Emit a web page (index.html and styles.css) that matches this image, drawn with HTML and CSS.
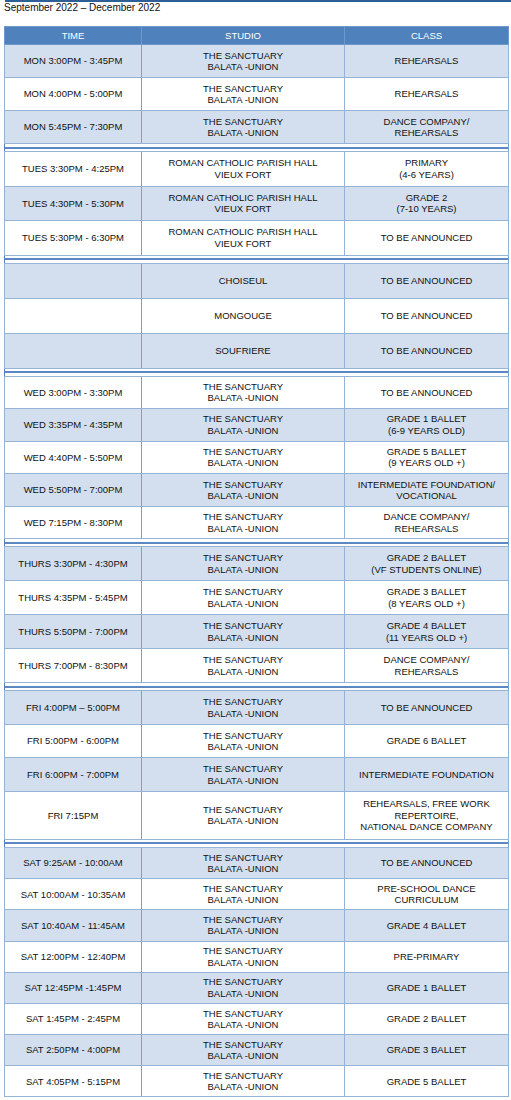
FILE: index.html
```html
<!DOCTYPE html>
<html lang="en">
<head>
<meta charset="utf-8">
<title>Schedule</title>
<link rel="stylesheet" href="styles.css">
</head>
<body>
<div class="page">
  <div class="topbar"></div>
  <div class="title">September 2022 – December 2022</div>
  <table class="sched">
    <colgroup><col class="c1"><col class="c2"><col class="c3"></colgroup>
    <thead>
      <tr class="head"><th>TIME</th><th>STUDIO</th><th>CLASS</th></tr>
    </thead>
    <tbody>
      <tr class="lt mon"><td>MON 3:00PM - 3:45PM</td><td>THE SANCTUARY<br>BALATA -UNION</td><td>REHEARSALS</td></tr>
      <tr class="mon"><td>MON 4:00PM - 5:00PM</td><td>THE SANCTUARY<br>BALATA -UNION</td><td>REHEARSALS</td></tr>
      <tr class="lt mon"><td>MON 5:45PM - 7:30PM</td><td>THE SANCTUARY<br>BALATA -UNION</td><td>DANCE COMPANY/<br>REHEARSALS</td></tr>
      <tr class="sep"><td colspan="3"><div class="rule"></div></td></tr>
      <tr class="tue"><td>TUES 3:30PM - 4:25PM</td><td>ROMAN CATHOLIC PARISH HALL<br>VIEUX FORT</td><td>PRIMARY<br>(4-6 YEARS)</td></tr>
      <tr class="lt tue"><td>TUES 4:30PM - 5:30PM</td><td>ROMAN CATHOLIC PARISH HALL<br>VIEUX FORT</td><td>GRADE 2<br>(7-10 YEARS)</td></tr>
      <tr class="tue"><td>TUES 5:30PM - 6:30PM</td><td>ROMAN CATHOLIC PARISH HALL<br>VIEUX FORT</td><td>TO BE ANNOUNCED</td></tr>
      <tr class="sep"><td colspan="3"><div class="rule"></div></td></tr>
      <tr class="lt loc"><td></td><td>CHOISEUL</td><td>TO BE ANNOUNCED</td></tr>
      <tr class="loc"><td></td><td>MONGOUGE</td><td>TO BE ANNOUNCED</td></tr>
      <tr class="lt loc"><td></td><td>SOUFRIERE</td><td>TO BE ANNOUNCED</td></tr>
      <tr class="sep"><td colspan="3"><div class="rule"></div></td></tr>
      <tr class="wed"><td>WED 3:00PM - 3:30PM</td><td>THE SANCTUARY<br>BALATA -UNION</td><td>TO BE ANNOUNCED</td></tr>
      <tr class="lt wed"><td>WED 3:35PM - 4:35PM</td><td>THE SANCTUARY<br>BALATA -UNION</td><td>GRADE 1 BALLET<br>(6-9 YEARS OLD)</td></tr>
      <tr class="wed"><td>WED 4:40PM - 5:50PM</td><td>THE SANCTUARY<br>BALATA -UNION</td><td>GRADE 5 BALLET<br>(9 YEARS OLD +)</td></tr>
      <tr class="lt wed"><td>WED 5:50PM - 7:00PM</td><td>THE SANCTUARY<br>BALATA -UNION</td><td>INTERMEDIATE FOUNDATION/<br>VOCATIONAL</td></tr>
      <tr class="wed"><td>WED 7:15PM - 8:30PM</td><td>THE SANCTUARY<br>BALATA -UNION</td><td>DANCE COMPANY/<br>REHEARSALS</td></tr>
      <tr class="sep"><td colspan="3"><div class="rule"></div></td></tr>
      <tr class="lt thu"><td>THURS 3:30PM - 4:30PM</td><td>THE SANCTUARY<br>BALATA -UNION</td><td>GRADE 2 BALLET<br>(VF STUDENTS ONLINE)</td></tr>
      <tr class="thu"><td>THURS 4:35PM - 5:45PM</td><td>THE SANCTUARY<br>BALATA -UNION</td><td>GRADE 3 BALLET<br>(8 YEARS OLD +)</td></tr>
      <tr class="lt thu"><td>THURS 5:50PM - 7:00PM</td><td>THE SANCTUARY<br>BALATA -UNION</td><td>GRADE 4 BALLET<br>(11 YEARS OLD +)</td></tr>
      <tr class="thu"><td>THURS 7:00PM - 8:30PM</td><td>THE SANCTUARY<br>BALATA -UNION</td><td>DANCE COMPANY/<br>REHEARSALS</td></tr>
      <tr class="sep"><td colspan="3"><div class="rule"></div></td></tr>
      <tr class="lt fri"><td>FRI 4:00PM – 5:00PM</td><td>THE SANCTUARY<br>BALATA -UNION</td><td>TO BE ANNOUNCED</td></tr>
      <tr class="fri"><td>FRI 5:00PM - 6:00PM</td><td>THE SANCTUARY<br>BALATA -UNION</td><td>GRADE 6 BALLET</td></tr>
      <tr class="lt fri"><td>FRI 6:00PM - 7:00PM</td><td>THE SANCTUARY<br>BALATA -UNION</td><td>INTERMEDIATE FOUNDATION</td></tr>
      <tr class="tall"><td>FRI 7:15PM</td><td>THE SANCTUARY<br>BALATA -UNION</td><td>REHEARSALS, FREE WORK<br>REPERTOIRE,<br>NATIONAL DANCE COMPANY</td></tr>
      <tr class="sep"><td colspan="3"><div class="rule"></div></td></tr>
      <tr class="lt sat"><td>SAT 9:25AM - 10:00AM</td><td>THE SANCTUARY<br>BALATA -UNION</td><td>TO BE ANNOUNCED</td></tr>
      <tr class="sat"><td>SAT 10:00AM - 10:35AM</td><td>THE SANCTUARY<br>BALATA -UNION</td><td>PRE-SCHOOL DANCE<br>CURRICULUM</td></tr>
      <tr class="lt sat"><td>SAT 10:40AM - 11:45AM</td><td>THE SANCTUARY<br>BALATA -UNION</td><td>GRADE 4 BALLET</td></tr>
      <tr class="sat"><td>SAT 12:00PM - 12:40PM</td><td>THE SANCTUARY<br>BALATA -UNION</td><td>PRE-PRIMARY</td></tr>
      <tr class="lt sat"><td>SAT 12:45PM -1:45PM</td><td>THE SANCTUARY<br>BALATA -UNION</td><td>GRADE 1 BALLET</td></tr>
      <tr class="sat"><td>SAT 1:45PM - 2:45PM</td><td>THE SANCTUARY<br>BALATA -UNION</td><td>GRADE 2 BALLET</td></tr>
      <tr class="lt sat"><td>SAT 2:50PM - 4:00PM</td><td>THE SANCTUARY<br>BALATA -UNION</td><td>GRADE 3 BALLET</td></tr>
      <tr class="sat"><td>SAT 4:05PM - 5:15PM</td><td>THE SANCTUARY<br>BALATA -UNION</td><td>GRADE 5 BALLET</td></tr>
    </tbody>
  </table>
</div>
</body>
</html>
```

FILE: styles.css
```css
html, body {
  margin: 0;
  padding: 0;
  background: #ffffff;
}

.page {
  padding-left: 4px;
  font-family: "Liberation Sans", Arial, sans-serif;
  color: #111111;
}

.topbar {
  height: 2px;
  margin-left: 1px;
  background: #2f5f97;
}

.title {
  font-size: 10px;
  line-height: 12px;
}

.sched {
  margin-top: 12px;
  width: 504px;
  border-collapse: collapse;
  table-layout: fixed;
  border: 1px solid #4f81bd;
  font-size: 9.5px;
  line-height: 11.5px;
}

.c1 { width: 137px; }
.c2 { width: 203px; }
.c3 { width: 164px; }

.sched th,
.sched td {
  border: 1px solid #95b3d7;
  padding: 0 2px;
  text-align: center;
  vertical-align: middle;
}

.sched td:first-child {
  border-right-color: #7ba0cd;
}

.sched tr.head { height: 18px; }

.head th {
  background: #4f81bd;
  color: #ffffff;
  font-weight: normal;
  padding: 0 2px;
  border-color: #6f98cc;
}

.sched tr { height: 33px; }
.sched tr.tue { height: 34.5px; }
.sched tr.loc { height: 35px; }
.sched tr.wed { height: 32.6px; }
.sched tr.thu { height: 34px; }
.sched tr.fri { height: 33.5px; }
.sched tr.tall { height: 48px; }
.sched tr.sat { height: 31.2px; }

.lt td { background: #d3dfee; }

.sched tr.sep { height: 8px; }
.sep td {
  padding: 0;
  height: 6px;
  background: #ffffff;
  border-left-color: #4f81bd;
  border-right-color: #4f81bd;
}

.rule {
  height: 2px;
  margin: 2px 0;
  background: #5b87c3;
}
```
